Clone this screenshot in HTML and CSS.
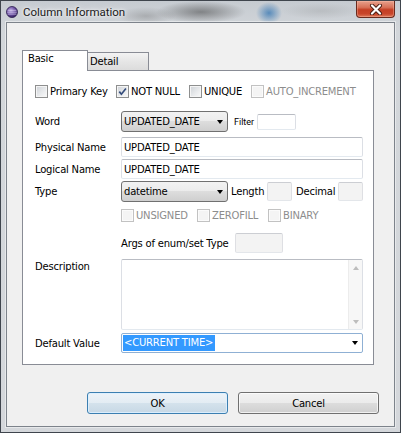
FILE: index.html
```html
<!DOCTYPE html>
<html>
<head>
<meta charset="utf-8">
<title>Column Information</title>
<link rel="stylesheet" href="styles.css">
</head>
<body>
<div class="window">
  <div class="titlebar">
    <svg class="app-icon" width="12" height="12" viewBox="0 0 12 12">
      <defs>
        <radialGradient id="sph" cx="0.4" cy="0.35" r="0.7">
          <stop offset="0" stop-color="#b9a8e0"/>
          <stop offset="0.55" stop-color="#6b4fa3"/>
          <stop offset="1" stop-color="#2e1b57"/>
        </radialGradient>
      </defs>
      <circle cx="6" cy="6" r="5.5" fill="url(#sph)" stroke="#2a1a4c" stroke-width="0.8"/>
      <path d="M1.6 4.3H10.4M1.2 6.2H10.8M1.6 8.1H10.4" stroke="#e6ddf7" stroke-width="0.8" opacity="0.75"/>
    </svg>
    <span class="title">Column Information</span>
    <div class="close">
      <svg width="14" height="11" viewBox="0 0 14 11">
        <path d="M3 1.5L11 9.5M11 1.5L3 9.5" stroke="#4a1c12" stroke-width="4" stroke-linecap="round"/>
        <path d="M3 1.5L11 9.5M11 1.5L3 9.5" stroke="#ffffff" stroke-width="2.2" stroke-linecap="round"/>
      </svg>
    </div>
  </div>

  <div class="client">
    <div class="tabs">
      <div class="tab active">Basic</div>
      <div class="tab">Detail</div>
    </div>

    <div class="panel">
      <div class="checks">
        <label class="chk"><span class="cb"></span><span>Primary Key</span></label>
        <label class="chk"><span class="cb"><svg width="11" height="11" viewBox="0 0 11 11"><path d="M2.3 5.6L4.4 8.2L8.9 2.4" fill="none" stroke="#354d7c" stroke-width="1.7"/></svg></span><span>NOT NULL</span></label>
        <label class="chk"><span class="cb"></span><span>UNIQUE</span></label>
        <label class="chk disabled"><span class="cb"></span><span>AUTO_INCREMENT</span></label>
      </div>

      <div class="row row-word">
        <span class="lbl">Word</span>
        <div class="fieldline">
          <div class="combo"><span>UPDATED_DATE</span><span class="arrow"></span></div>
          <span class="small-lbl">Filter</span>
          <div class="input filter"></div>
        </div>
      </div>

      <div class="row row-phys">
        <span class="lbl">Physical Name</span>
        <div class="input">UPDATED_DATE</div>
      </div>

      <div class="row row-logic">
        <span class="lbl">Logical Name</span>
        <div class="input">UPDATED_DATE</div>
      </div>

      <div class="row row-type">
        <span class="lbl">Type</span>
        <div class="fieldline">
          <div class="combo"><span>datetime</span><span class="arrow"></span></div>
          <span class="mid-lbl len-lbl">Length</span>
          <div class="input disabled-input small"></div>
          <span class="mid-lbl dec-lbl">Decimal</span>
          <div class="input disabled-input small"></div>
        </div>
      </div>

      <div class="row row-flags">
        <span></span>
        <div class="flags">
          <label class="chk disabled"><span class="cb"></span><span>UNSIGNED</span></label>
          <label class="chk disabled"><span class="cb"></span><span>ZEROFILL</span></label>
          <label class="chk disabled"><span class="cb"></span><span>BINARY</span></label>
        </div>
      </div>

      <div class="row row-args">
        <span></span>
        <div class="fieldline">
          <span class="args-lbl">Args of enum/set Type</span>
          <div class="input disabled-input args"></div>
        </div>
      </div>

      <div class="row row-desc">
        <span class="lbl desc-lbl">Description</span>
        <div class="textarea">
          <div class="vscroll">
            <span class="up"></span>
            <span class="down"></span>
          </div>
        </div>
      </div>

      <div class="row row-default">
        <span class="lbl">Default Value</span>
        <div class="combo-edit"><span class="sel">&lt;CURRENT TIME&gt;</span><span class="arrow"></span></div>
      </div>
    </div>

    <div class="buttons">
      <div class="btn default">OK</div>
      <div class="btn">Cancel</div>
    </div>
  </div>
</div>
</body>
</html>
```

FILE: styles.css
```css
* { box-sizing: border-box; }

html, body {
  margin: 0;
  padding: 0;
}

body {
  width: 401px;
  height: 433px;
  overflow: hidden;
  font-family: "DejaVu Sans", Roboto, sans-serif;
  font-size: 10px;
  letter-spacing: -0.2px;
  color: #000;
  background: #a9aeb5;
}

.window {
  width: 401px;
  height: 433px;
  border: 1px solid #3f454d;
  padding: 0 5px 5px 5px;
  display: flex;
  flex-direction: column;
  background:
    radial-gradient(ellipse 13px 11px at 268px 12px, rgba(40, 110, 175, 0.7), rgba(40, 110, 175, 0) 100%),
    radial-gradient(ellipse 45px 11px at 200px 11px, rgba(55, 55, 55, 0.5), rgba(55, 55, 55, 0) 100%),
    radial-gradient(ellipse 30px 9px at 145px 15px, rgba(90, 90, 90, 0.3), rgba(90, 90, 90, 0) 100%),
    radial-gradient(ellipse 40px 8px at 320px 10px, rgba(120, 120, 120, 0.2), rgba(120, 120, 120, 0) 100%),
    linear-gradient(to bottom, #c6cbd1, #d2d6da 30px, #d4d7db);
}

/* Title bar */
.titlebar {
  height: 21px;
  display: flex;
  align-items: center;
}

.app-icon {
  flex: none;
}

.title {
  margin-left: 5px;
  font-family: Roboto, "DejaVu Sans", sans-serif;
  font-size: 11.5px;
  letter-spacing: 0;
  color: #1a1a1a;
  text-shadow: 0 0 6px rgba(255, 255, 255, 0.9), 0 0 3px rgba(255, 255, 255, 0.9);
}

.close {
  margin-left: auto;
  align-self: flex-start;
  width: 39px;
  height: 17px;
  border: 1px solid #6a2a1d;
  border-top: none;
  border-radius: 0 0 4px 4px;
  background: linear-gradient(to bottom, #e7a08c 0%, #d77158 40%, #c43f24 55%, #c8452a 80%, #de7a5b 100%);
  box-shadow: inset 0 0 0 1px rgba(255, 200, 180, 0.35);
  display: flex;
  align-items: center;
  justify-content: center;
}

/* Client area */
.client {
  flex: 1;
  border: 1px solid #7d838b;
  box-shadow: 0 0 0 1px rgba(255, 255, 255, 0.45);
  background: #f0f0f0;
  display: flex;
  flex-direction: column;
}

.tabs {
  margin-top: 27px;
  margin-left: 15px;
  display: flex;
  align-items: flex-end;
  height: 20px;
}

.tab {
  height: 18px;
  width: 61px;
  border: 1px solid #898c95;
  border-left: none;
  border-bottom: none;
  background: linear-gradient(to bottom, #f3f3f3, #e6e6e6 50%, #dcdcdc);
  padding-left: 2px;
  line-height: 17px;
}

.tab.active {
  position: relative;
  z-index: 1;
  width: 66px;
  height: 21px;
  margin-bottom: -1px;
  border-left: 1px solid #898c95;
  background: #fff;
  padding-left: 5px;
  line-height: 16px;
}

.panel {
  margin-left: 15px;
  width: 352px;
  height: 295px;
  background: #fff;
  border: 1px solid #898c95;
  padding: 14px 10px 11px 12px;
  display: flex;
  flex-direction: column;
}

/* Checkboxes */
.checks {
  display: grid;
  grid-template-columns: 81px 73px 62px 1fr;
  height: 13px;
  align-items: center;
}

.chk {
  display: flex;
  align-items: center;
  gap: 2px;
  height: 13px;
  line-height: 13px;
  white-space: nowrap;
}

.cb {
  flex: none;
  width: 13px;
  height: 13px;
  border: 1px solid #8e8f8f;
  background: linear-gradient(135deg, #cdd1d6 0%, #e8eaec 55%, #fafafa 100%);
  box-shadow: inset 0 0 0 1px #f5f5f5;
  display: flex;
  align-items: center;
  justify-content: center;
}

.chk.disabled {
  color: #8d8d8d;
}

.chk.disabled .cb {
  border-color: #c2c2c2;
  background: #f4f4f4;
  box-shadow: inset 0 0 0 1px #fbfbfb;
}

/* Form rows */
.row {
  display: grid;
  grid-template-columns: 86px 242px;
  align-items: center;
}

.lbl {
  white-space: nowrap;
}

.row-word { margin-top: 13px; height: 21px; }
.row-phys { margin-top: 5px; height: 20px; }
.row-logic { margin-top: 2px; height: 20px; }
.row-type { margin-top: 2px; height: 21px; }
.row-flags { margin-top: 7px; height: 13px; }
.row-args { margin-top: 11px; height: 20px; }
.row-desc { margin-top: 6px; height: 71px; align-items: start; }
.row-default { margin-top: 3px; height: 20px; }

.desc-lbl {
  padding-top: 2px;
}

.fieldline {
  display: flex;
  align-items: center;
  height: 100%;
}

.combo {
  flex: none;
  width: 107px;
  height: 21px;
  border: 1px solid #707070;
  border-radius: 3px;
  background: linear-gradient(to bottom, #f2f2f2 0%, #ebebeb 49%, #dddddd 50%, #cfcfcf 100%);
  display: flex;
  align-items: center;
  padding-left: 2px;
  white-space: nowrap;
}

.arrow {
  flex: none;
  margin-left: auto;
  margin-right: 4px;
  width: 0;
  height: 0;
  border-left: 3.5px solid transparent;
  border-right: 3.5px solid transparent;
  border-top: 4px solid #000;
}

.input {
  height: 20px;
  border: 1px solid;
  border-color: #b9bcc3 #dcdfe5 #e3e9ef #dcdfe5;
  border-radius: 2px;
  background: #fff;
  padding-left: 2px;
  display: flex;
  align-items: center;
  white-space: nowrap;
}

.small-lbl {
  width: 29px;
  padding-left: 6px;
  font-family: Roboto, "DejaVu Sans", sans-serif;
  font-size: 9px;
  letter-spacing: 0;
}

.input.filter {
  width: 39px;
  height: 16px;
}

.mid-lbl {
  white-space: nowrap;
}

.len-lbl {
  width: 39px;
  padding-left: 3px;
}

.dec-lbl {
  width: 46px;
  padding-left: 4px;
}

.input.small {
  width: 25px;
  height: 19px;
}

.disabled-input {
  background: #f3f3f3;
  border-color: #ccced3 #dedfe3 #e3e6ea #dedfe3;
}

.flags {
  display: grid;
  grid-template-columns: 76px 71px 1fr;
  align-items: center;
}

.args-lbl {
  width: 114px;
  white-space: nowrap;
}

.input.args {
  width: 48px;
}

.textarea {
  height: 71px;
  border: 1px solid;
  border-color: #b9bcc3 #dcdfe5 #e3e9ef #dcdfe5;
  border-radius: 2px;
  background: #fff;
  display: flex;
  justify-content: flex-end;
}

.vscroll {
  width: 14px;
  background: #f7f7f7;
  border-left: 1px solid #ececec;
  display: flex;
  flex-direction: column;
  justify-content: space-between;
  align-items: center;
  padding: 6px 0 5px 0;
}

.vscroll .up,
.vscroll .down {
  width: 0;
  height: 0;
  border-left: 3.5px solid transparent;
  border-right: 3.5px solid transparent;
}

.vscroll .up {
  border-bottom: 4px solid #bdbdbd;
}

.vscroll .down {
  border-top: 4px solid #bdbdbd;
}

.combo-edit {
  height: 20px;
  border: 1px solid #8fb0d4;
  border-radius: 2px;
  background: #fff;
  display: flex;
  align-items: center;
  padding-left: 1px;
}

.sel {
  background: #3399ff;
  color: #fff;
  height: 16px;
  line-height: 16px;
  padding: 0 2px 0 1px;
  white-space: nowrap;
}

.combo-edit .arrow {
  margin-right: 4px;
}

/* Buttons */
.buttons {
  margin-top: 27px;
  padding-right: 15px;
  display: flex;
  justify-content: flex-end;
  gap: 10px;
}

.btn {
  width: 141px;
  height: 22px;
  border: 1px solid #707070;
  border-radius: 3px;
  background: linear-gradient(to bottom, #f2f2f2 0%, #ebebeb 49%, #dddddd 50%, #cfcfcf 100%);
  box-shadow: inset 0 0 0 1px rgba(255, 255, 255, 0.7);
  display: flex;
  align-items: center;
  justify-content: center;
}

.btn.default {
  border-color: #3c7fb1;
  background: linear-gradient(to bottom, #edf3f8 0%, #e3ecf3 49%, #d4e2ec 50%, #c7d8e5 100%);
  box-shadow: inset 0 0 0 1px rgba(220, 240, 255, 0.9);
}
```
